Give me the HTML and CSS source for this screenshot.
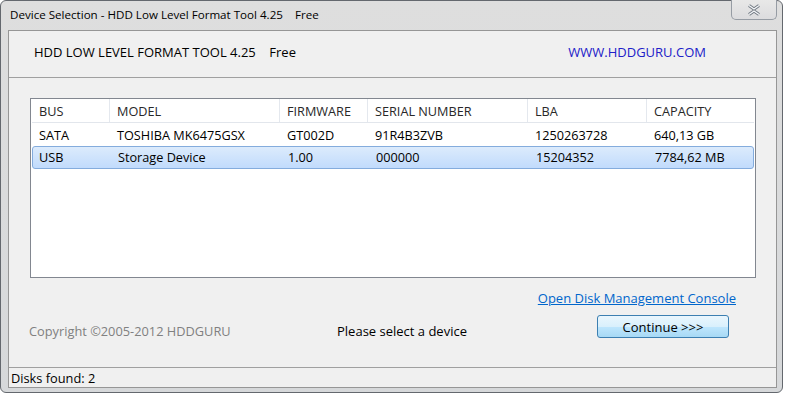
FILE: index.html
```html
<!DOCTYPE html>
<html lang="en">

<head>
    <meta charset="UTF-8">
    <meta name="viewport" content="width=device-width, initial-scale=1.0">
    <title>Device Selection</title>
    <link rel="stylesheet" href="styles.css">
</head>

<body>
    <div class="window">
        <div class="titlebar">
            <span class="title">Device Selection - HDD Low Level Format Tool 4.25&nbsp;&nbsp;&nbsp;&nbsp;Free</span>
            <button class="close_btn">
                <svg width="16" height="12" viewBox="0 0 16 12">
                    <path d="M3 1.5 L8 5 L13 1.5 M3 10.5 L8 7 L13 10.5" fill="none" stroke="#6f7780" stroke-width="3.2" stroke-linejoin="round" />
                    <path d="M3 1.5 L8 5 L13 1.5 M3 10.5 L8 7 L13 10.5" fill="none" stroke="#f4f6f8" stroke-width="1.4" stroke-linejoin="round" />
                </svg>
            </button>
        </div>
        <div class="client">
            <div class="app_header">
                <span class="app_name">HDD LOW LEVEL FORMAT TOOL 4.25&nbsp;&nbsp;&nbsp;&nbsp;Free</span>
                <a class="site_link">WWW.HDDGURU.COM</a>
            </div>

            <div class="device_list">
                <div class="list_row list_head">
                    <div>BUS</div>
                    <div>MODEL</div>
                    <div>FIRMWARE</div>
                    <div>SERIAL NUMBER</div>
                    <div>LBA</div>
                    <div>CAPACITY</div>
                </div>
                <div class="list_row">
                    <div>SATA</div>
                    <div>TOSHIBA MK6475GSX</div>
                    <div>GT002D</div>
                    <div>91R4B3ZVB</div>
                    <div>1250263728</div>
                    <div>640,13 GB</div>
                </div>
                <div class="list_row selected">
                    <div>USB</div>
                    <div>Storage Device</div>
                    <div>1.00</div>
                    <div>000000</div>
                    <div>15204352</div>
                    <div>7784,62 MB</div>
                </div>
            </div>

            <div class="link_line">
                <a class="console_link">Open Disk Management Console</a>
            </div>

            <div class="action_line">
                <span class="copyright">Copyright ©2005-2012 HDDGURU</span>
                <span class="hint">Please select a device</span>
                <button class="continue_btn">Continue &gt;&gt;&gt;</button>
            </div>

            <div class="status_bar">Disks found: 2</div>
        </div>
    </div>
</body>

</html>
```

FILE: styles.css
```css
* {
    margin: 0;
    padding: 0;
    box-sizing: border-box;
}

body {
    background: white;
    font-family: "Open Sans", "Noto Sans", sans-serif;
    font-size: 12px;
    color: black;
}

.window {
    width: 783px;
    height: 393px;
    border: solid 1px rgb(100, 104, 110);
    border-radius: 6px;
    background: linear-gradient(rgb(222, 222, 222), rgb(214, 216, 218));
    display: flex;
    flex-flow: column;
    padding: 0 5px 4px 7px;
}

.titlebar {
    height: 29px;
    display: flex;
    align-items: flex-start;
    justify-content: space-between;
}

.title {
    padding: 6px 0 0 2px;
    font-size: 11.6px;
    color: black;
}

.close_btn {
    width: 46px;
    height: 20px;
    margin-top: -1px;
    border: solid 1px rgb(150, 156, 164);
    border-top: none;
    border-radius: 0 0 5px 5px;
    background: linear-gradient(rgb(232, 232, 232), rgb(220, 220, 222));
    display: flex;
    align-items: center;
    justify-content: center;
}

.client {
    flex: 1;
    background: rgb(240, 240, 240);
    border: solid 1px rgb(150, 150, 150);
    display: flex;
    flex-flow: column;
}

.app_header {
    height: 47px;
    display: flex;
    align-items: center;
    justify-content: space-between;
    padding: 0 70px 4px 25px;
    border-bottom: solid 1px rgb(160, 160, 160);
    font-size: 13px;
}

.site_link {
    color: rgb(32, 32, 200);
}

.device_list {
    margin: 20px 0 0 21px;
    width: 726px;
    height: 180px;
    background: white;
    border: solid 1px rgb(130, 135, 144);
    padding: 0 1px;
}

.list_row {
    display: grid;
    grid-template-columns: 78px 170px 88px 160px 119px 1fr;
    height: 23px;
    align-items: center;
    font-size: 12.7px;
}

.list_row div {
    padding-left: 7px;
}

.list_head {
    height: 24px;
    border-bottom: solid 1px rgb(226, 230, 236);
    color: rgb(40, 40, 40);
}

.list_head div {
    height: 100%;
    display: flex;
    align-items: center;
    padding-top: 1px;
    border-right: solid 1px rgb(228, 232, 238);
}

.list_head div:last-child {
    border-right: none;
}

.selected {
    border: solid 1px rgb(132, 172, 221);
    border-radius: 3px;
    background: linear-gradient(rgb(220, 235, 252), rgb(193, 219, 252));
}

.selected div {
    padding-bottom: 2px;
}

.selected div:first-child {
    padding-left: 6px;
}

.link_line {
    display: flex;
    justify-content: flex-end;
    padding: 11px 40px 0 0;
    height: 29px;
}

.console_link {
    color: rgb(0, 102, 204);
    text-decoration: underline;
    font-size: 13px;
}

.action_line {
    height: 60px;
    display: flex;
    align-items: flex-start;
    padding: 8px 0 0 20px;
}

.copyright {
    width: 308px;
    padding-top: 7px;
    color: rgb(128, 128, 128);
    font-size: 12.8px;
}

.hint {
    width: 260px;
    padding-top: 7px;
    font-size: 13px;
}

.continue_btn {
    width: 132px;
    height: 23px;
    border: solid 1px rgb(60, 127, 177);
    border-radius: 3px;
    background: linear-gradient(rgb(234, 246, 253) 0%, rgb(217, 240, 252) 50%, rgb(190, 230, 253) 52%, rgb(167, 217, 245) 100%);
    font-family: "Open Sans", "Noto Sans", sans-serif;
    font-size: 13px;
    color: black;
}

.status_bar {
    height: 20px;
    border-top: solid 1px rgb(160, 160, 160);
    padding: 1px 0 0 2px;
    font-size: 12.8px;
}
```
